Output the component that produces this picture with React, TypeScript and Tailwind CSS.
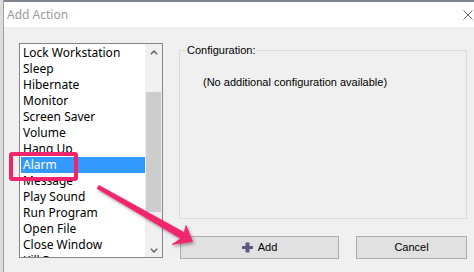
const actions = [
  "Lock Workstation",
  "Sleep",
  "Hibernate",
  "Monitor",
  "Screen Saver",
  "Volume",
  "Hang Up",
  "Alarm",
  "Message",
  "Play Sound",
  "Run Program",
  "Open File",
  "Close Window",
  "Kill Process",
];

function Chevron({ up }: { up?: boolean }) {
  return (
    <svg width="8" height="5" viewBox="0 0 8 5" className={up ? "" : "rotate-180"}>
      <polyline points="0.8,4.3 4,1.1 7.2,4.3" fill="none" stroke="#606060" strokeWidth="1.4" />
    </svg>
  );
}

function PlusIcon() {
  return (
    <svg width="11" height="11" viewBox="0 0 11 11">
      <path
        d="M4 0.5h3a0.5 0.5 0 0 1 .5.5v3h3a0.5 0.5 0 0 1 .5.5v2a0.5 0.5 0 0 1-.5.5h-3v3a0.5 0.5 0 0 1-.5.5h-3a0.5 0.5 0 0 1-.5-.5v-3h-3a0.5 0.5 0 0 1-.5-.5v-2a0.5 0.5 0 0 1 .5-.5h3v-3a0.5 0.5 0 0 1 .5-.5z"
        fill="#5c5a80"
      />
    </svg>
  );
}

export default function App() {
  return (
    <div className="relative flex h-[272px] w-[474px] overflow-hidden bg-[#f0f0f0] font-['Noto_Sans',sans-serif] text-[12px] text-black">
      {/* desktop behind the dialog */}
      <div className="w-[4px] shrink-0 border-r border-[#a0a0a0] bg-[#dcdcdc]" />

      <div className="flex flex-1 flex-col">
        {/* title bar */}
        <div className="h-[2px] bg-[#80858d]" />
        <div className="flex h-[25px] items-center justify-between bg-white pl-[3px] pr-[1px]">
          <span className="leading-none text-[#9a9a9a]">Add Action</span>
          <svg width="10" height="10" viewBox="0 0 10 10">
            <path d="M0.5 0.5L9.5 9.5M9.5 0.5L0.5 9.5" stroke="#6a6a6a" strokeWidth="1" />
          </svg>
        </div>

        <div className="flex flex-1 gap-[16px] pl-[15px] pr-[7px] pt-[16px]">
          {/* action list */}
          <div className="flex h-[215px] w-[144px] shrink-0 border border-[#82878f] bg-white">
            <div className="flex flex-1 flex-col overflow-hidden pl-[1px] pt-[1px]">
              {actions.map((a) => (
                <div
                  key={a}
                  className={
                    a === "Alarm"
                      ? "h-[16px] shrink-0 bg-[#3399ff] pl-[2px] leading-[16px] text-white"
                      : "h-[16px] shrink-0 pl-[2px] leading-[16px]"
                  }
                >
                  {a}
                </div>
              ))}
            </div>
            <div className="flex w-[17px] shrink-0 flex-col bg-[#f0f0f0]">
              <div className="flex h-[17px] items-center justify-center">
                <Chevron up />
              </div>
              <div className="ml-[1px] mt-[31px] h-[120px] w-[15px] bg-[#cdcdcd]" />
              <div className="flex flex-1 items-end justify-center pb-[4px]">
                <Chevron />
              </div>
            </div>
          </div>

          {/* configuration */}
          <div className="flex flex-1 flex-col pt-[7px] font-['Liberation_Sans',sans-serif] text-[11px]">
            <div className="relative h-[169px] border border-[#dcdcdc] pl-[23px] pt-[23px]">
              <span className="absolute -top-[9px] left-[7px] bg-[#f0f0f0] leading-[16px]">Configuration:</span>
              <p className="leading-[16px]">(No additional configuration available)</p>
            </div>
            <div className="ml-[1px] mt-[17px] flex justify-between">
              <button className="flex h-[23px] w-[159px] items-center justify-center gap-[5px] border border-[#adadad] bg-[#e1e1e1]">
                <PlusIcon />
                <span>Add</span>
              </button>
              <button className="flex h-[23px] w-[111px] items-center justify-center border border-[#adadad] bg-[#e1e1e1]">
                Cancel
              </button>
            </div>
          </div>
        </div>
      </div>

      {/* annotation: highlight box */}
      <div className="absolute left-[9px] top-[152px] h-[29px] w-[69px] rounded-[3px] border-[4px] border-[#f0256c]" />

      {/* annotation: arrow */}
      <svg className="pointer-events-none absolute left-0 top-0" width="474" height="272" viewBox="0 0 474 272">
        <defs>
          <filter id="sh" x="-20%" y="-20%" width="140%" height="140%">
            <feDropShadow dx="1.5" dy="2" stdDeviation="1.5" floodColor="#000" floodOpacity="0.35" />
          </filter>
        </defs>
        <polygon
          points="98.9,185.4 184.2,232.6 186,225.5 192.5,241.5 172,244.5 180.8,238.6 97.1,188.6"
          fill="#f0256c"
          stroke="#f0256c"
          strokeWidth="0.8"
          strokeLinejoin="round"
          filter="url(#sh)"
        />
      </svg>
    </div>
  );
}
